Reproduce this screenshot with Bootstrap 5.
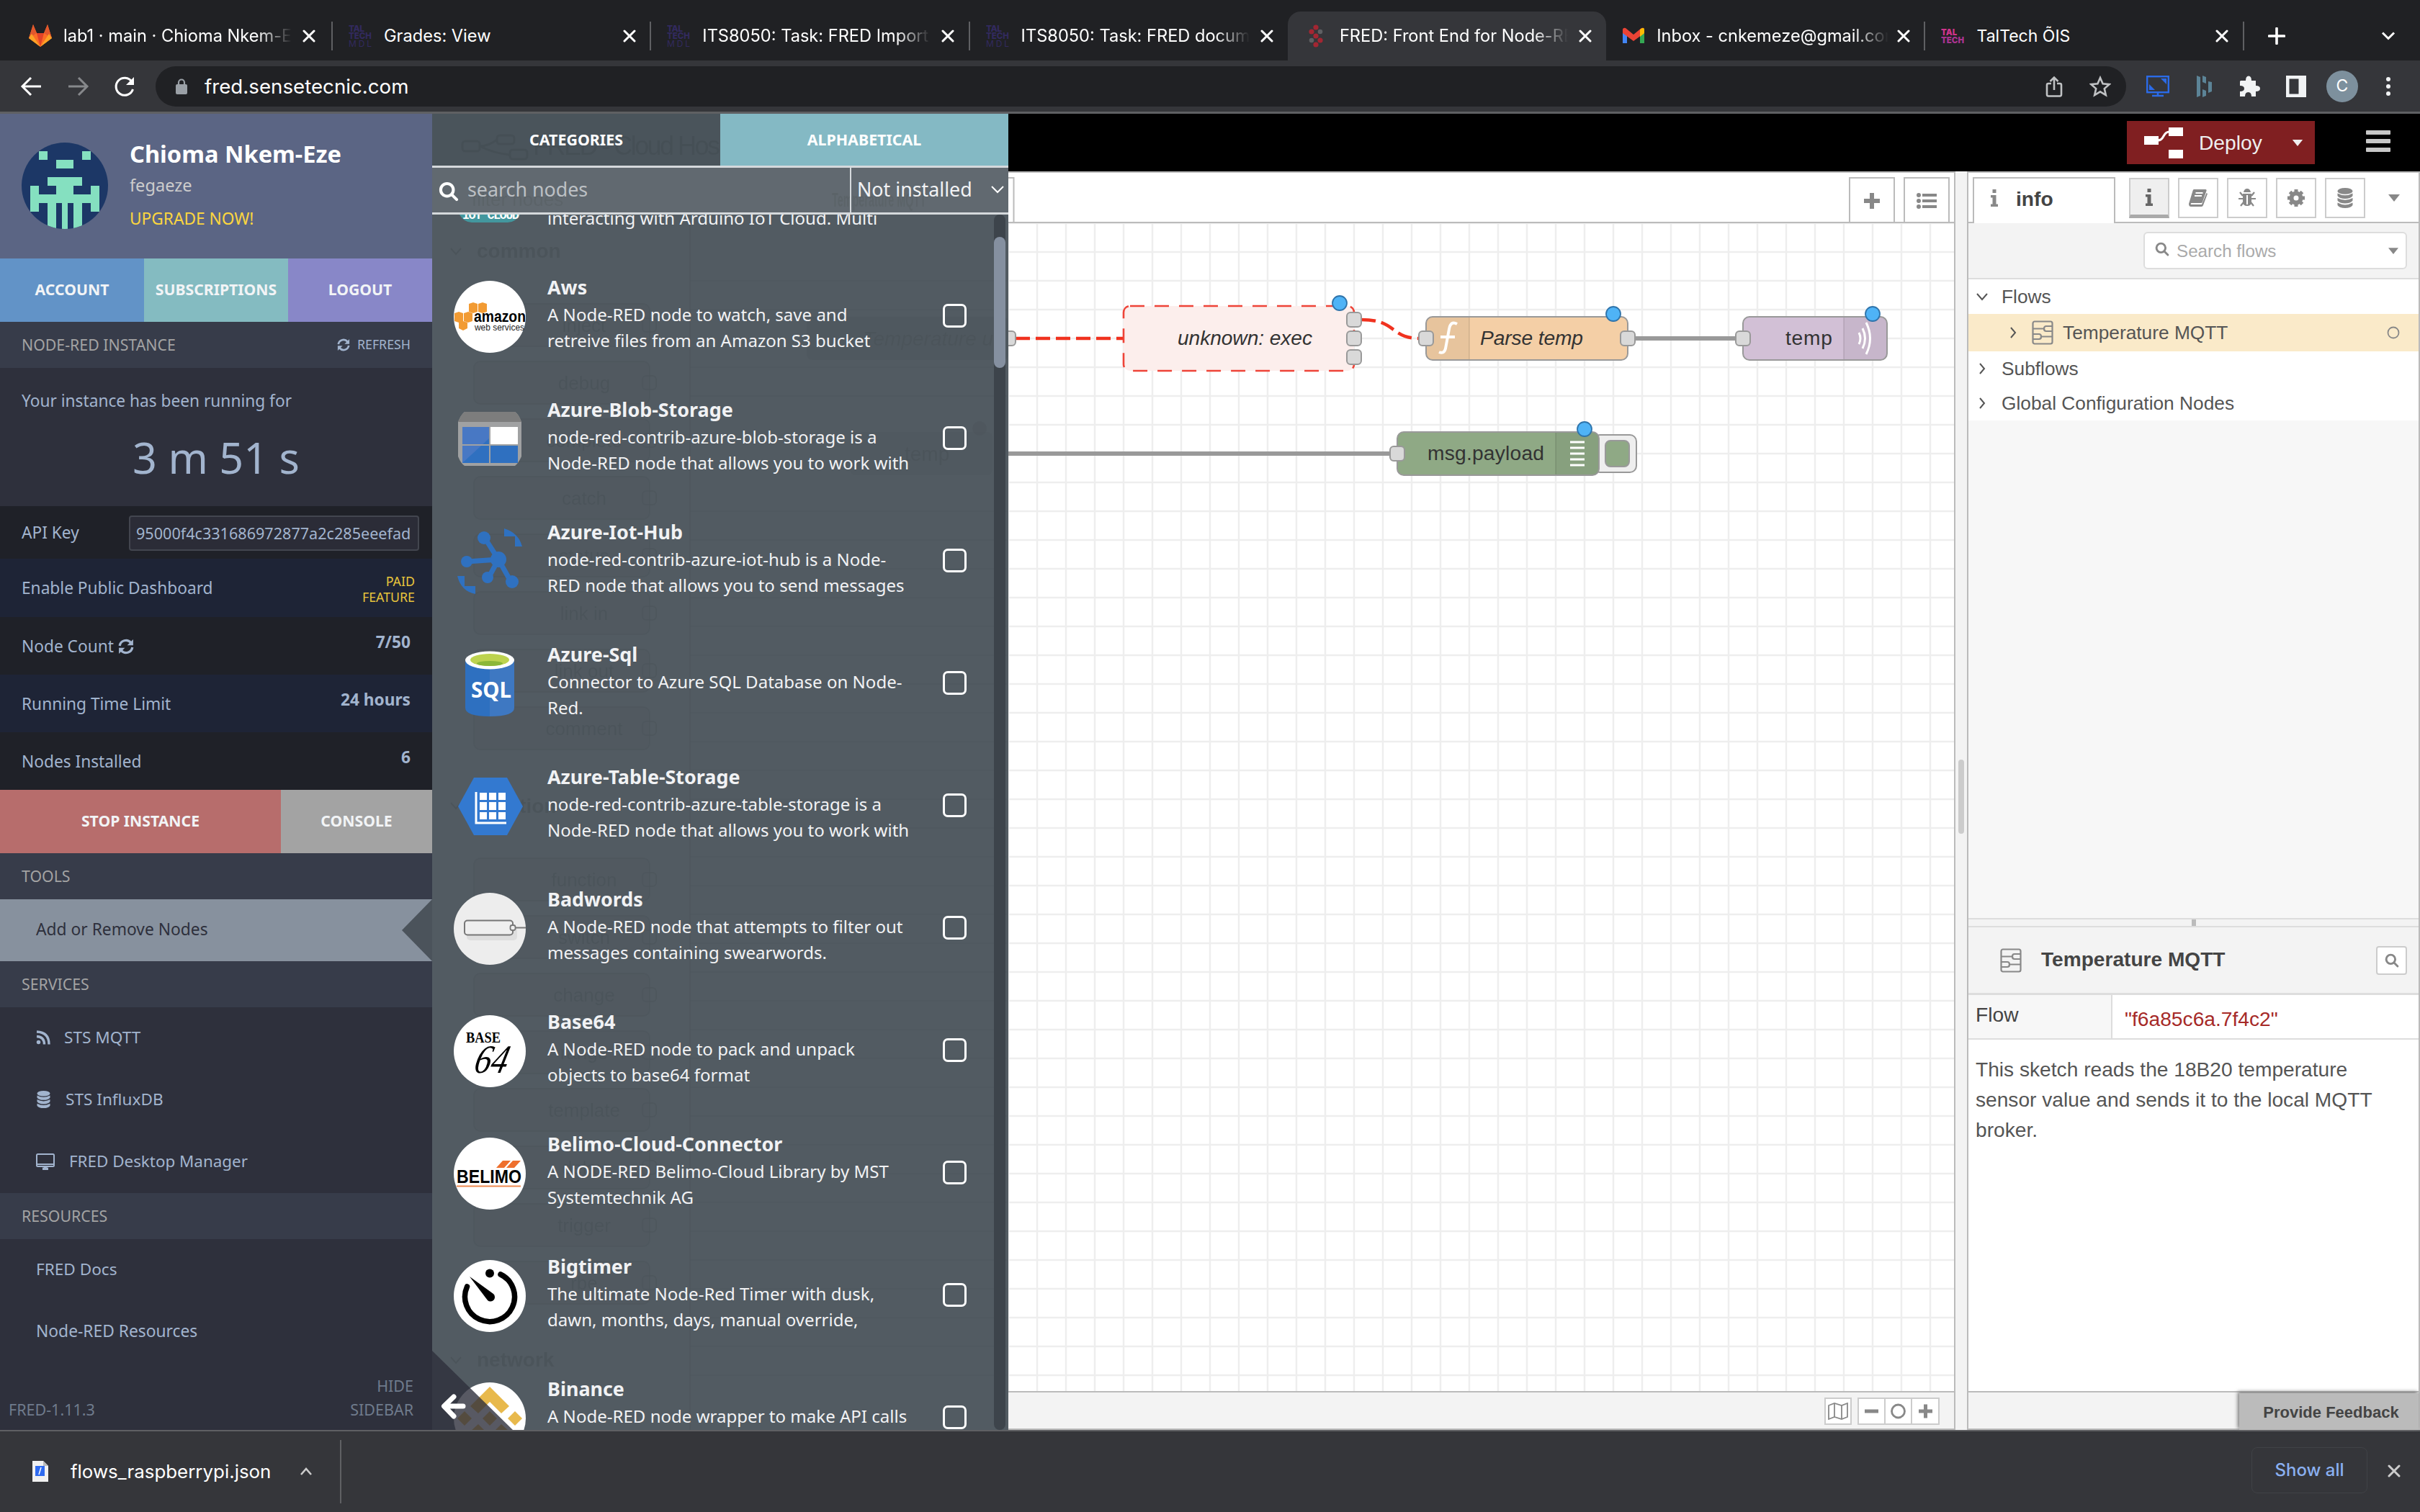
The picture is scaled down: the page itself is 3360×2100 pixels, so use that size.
<!DOCTYPE html>
<html lang="en">
<head>
<meta charset="utf-8">
<title>FRED: Front End for Node-RED</title>
<link href="https://cdn.jsdelivr.net/npm/bootstrap@5.3.0/dist/css/bootstrap.min.css" rel="stylesheet">
<style>
html,body{margin:0;height:2100px;overflow:hidden}
body{width:3360px;font-family:"Noto Sans",sans-serif;font-size:23px;line-height:1;background:#35363a}
svg{display:block;flex:none}
.chrome{font-family:Inter,Roboto,sans-serif;color:#fff}
.helv{font-family:"Liberation Sans",Arial,sans-serif}
/* browser tabs */
.tabstrip{height:84px;background:#202124;padding-top:16px}
.tabx{width:442.3px;height:68px;padding:0 0 0 23px;position:relative;font-size:23.6px}
.tabx .ttl{width:317px;margin-left:17px;overflow:hidden;white-space:nowrap;line-height:34px}
.tabx .fade-r{-webkit-mask-image:linear-gradient(90deg,#000 85%,transparent 100%);mask-image:linear-gradient(90deg,#000 85%,transparent 100%)}
.tabx .cls{margin-left:15px}
.tabx.sep::after{content:"";position:absolute;right:-1px;top:14px;width:2px;height:40px;background:#5f6063}
.tabx.on{background:#35363a;border-radius:18px 18px 0 0}
.toolbar{height:74px;border-bottom:3px solid #5f6063;background:#35363a}
.omni{width:2736px;height:56px;border-radius:28px;background:#202124;font-size:27.7px;padding-left:28px}
.avatar-c{width:44px;height:44px;border-radius:50%;background:#7d909d;font-size:23px}
/* FRED account sidebar */
.fred{width:600px;background:#2e303c;color:#a2b4ce;position:relative}
.prof{height:201px;background:#5b6584}
.nm{font-size:32.6px;font-weight:700;color:#fff;line-height:40px}
.btn3{height:88px;font-size:21.2px;font-weight:700;color:#f2f4f6}
.btn3>div{padding-bottom:2px}
.sect{height:64px;background:#373c4a;color:#a3a3a3;font-size:21.3px;padding:0 30px}
.rw{height:80px;padding:2px 30px 0;font-size:22.7px;background:#1f2128}
.rw.alt{background:#1e2436}
.rw b{margin-top:-11px}
.key{width:403px;height:49px;border:2px solid #43464f;border-radius:4px;background:#2b2c37;font-size:21.6px;padding-left:8px}
.it{height:86px;padding:0 0 2px 50px;font-size:22.6px}
.fit{color:#6f7b8c;font-size:21.5px;line-height:33px}
/* node drawer */
.drawer{width:800px;background:#525b62;color:#f1f2f4;position:relative;overflow:hidden}
.drawer>div{position:relative}
.dtab{width:400px;font-size:21.4px;font-weight:700;color:#fff;height:72px;padding-bottom:1px}
.dsearch{height:68px;border-top:3px solid #d5d9dc;border-bottom:3px solid #d5d9dc;background:rgba(255,255,255,.09);font-size:26.8px}
.nlist{height:1688px;overflow:hidden}
.nlist ul{margin:-113px 0 0;padding:0;width:776px}
.nlist li{height:170px;padding:0 0 0 30px;list-style:none}
.nlist h6{font-size:26.9px;font-weight:700;line-height:40px;margin:24px 0 0}
.nlist p{font-size:24.05px;line-height:36px;margin:0;white-space:nowrap}
.nlist .desc{width:549px;margin-left:30px;height:170px}
.nlist .form-check-input{width:33px;height:33px;margin:67px 0 0;border:3px solid #fff;border-radius:7px;background:transparent}
.ghost{position:absolute;left:0;top:0;pointer-events:none;opacity:.07}
.sbar{width:16px;margin-left:4px;background:#3d444b;border-radius:8px}
.sbar div{margin-top:31px;height:182px;border-radius:8px;background:#8590a0}
/* Node-RED editor */
.hdr{height:80px;background:#000}
.deploy{width:261px;height:60px;background:#801f21;color:#eee;font-size:28.2px}
.ws{width:1315px;border-right:2px solid #bbb;background:#fff}
.wtabs{height:72px;border-top:2px solid #bbb;border-bottom:2px solid #bbb;background:#fff}
.wbtn{width:64px;height:62px;border:2px solid #bbb;border-bottom:0;margin-top:6px;padding-top:2px}
.foot{height:54px;background:#f3f3f3;border-top:2px solid #bbb;border-bottom:2px solid #bbb}
.fb{height:38px;background:#fff;border:2px solid #ccc;margin-top:2px}
.sepr{width:16px;background:#f3f3f3}
.sepr div{width:8px;height:103px;background:#ccc;border-radius:4px}
.rs{width:629px;background:#fff;border-left:2px solid #bbb;border-right:2px solid #bbb;color:#444}
.itab{width:198px;height:66px;margin:6px 0 -2px 6px;border:2px solid #bbb;border-bottom:0;background:#fff;font-size:28.2px;font-weight:700;align-self:flex-start;padding-bottom:8px}
.ib{width:56px;height:56px;border:2px solid #ccc;background:#fff;margin-right:12px;margin-top:2px}
.ib.on{background:#efefef;border-bottom:5px solid #aaa}
.sf{width:366px;height:52px;border:2px solid #ddd;border-radius:6px;background:#fff;color:#aaa;font-size:24.2px}
.tr0{height:48px;font-size:26.3px;color:#555}
.pfb{position:absolute;right:0;bottom:0;width:249px;height:51px;background:#bbb;font-size:22px;font-weight:700;color:#444;box-shadow:-2px -2px 5px #777}
.dl{height:114px;border-top:2px solid #5f6063;background:#35363a}
</style>
<script src="https://cdn.jsdelivr.net/npm/bootstrap@5.3.0/dist/js/bootstrap.bundle.min.js"></script>
</head>
<body class="d-flex flex-column">
<svg width="0" height="0" class="position-absolute">
<symbol id="x" viewBox="0 0 18 18"><path d="M2 2L16 16M16 2L2 16" stroke="currentColor" stroke-width="3" stroke-linecap="round"/></symbol>
<symbol id="db" viewBox="0 0 24 32"><g fill="currentColor"><ellipse cx="12" cy="5" rx="12" ry="5"/><path d="M0 8.500q12 6.500 24 0v4q-3 4.500-12 4.500T0 12.500zM0 16q12 6.500 24 0v4q-3 4.500-12 4.500T0 20zM0 23.500q12 6.500 24 0v4q-3 4.500-12 4.500T0 27.500z"/></g></symbol>
<symbol id="ref" viewBox="0 0 20 20"><g fill="none" stroke="currentColor" stroke-width="3"><path d="M2 9A8 8 0 0 1 16 5M18 11A8 8 0 0 1 4 15"/></g><path d="M19 1v7.500h-7.500zM1 19v-7.500h7.500z" fill="currentColor"/></symbol>
<symbol id="mag" viewBox="0 0 24 24"><g fill="none" stroke="currentColor" stroke-width="3.500" stroke-linecap="round"><circle cx="10" cy="10" r="7.500"/><path d="M15.500 15.500L21.500 21.500"/></g></symbol>
<symbol id="flow" viewBox="0 0 30 34"><g fill="none" stroke="#888" stroke-width="2.200"><rect x="1.500" y="1.500" width="27" height="31" rx="2.500"/><path d="M2 11.500h15M28.500 8h-8.500q-3 0-3 3.500t3 3.500h8.500M2 19h8q3 0 3 3.500T10 26H2M13 22.500h15.500"/></g></symbol>
<symbol id="inf" viewBox="0 0 10 24"><path d="M2.500 0h5v5h-5zM0 8h7.500v12.500H10V24H0v-3.500h2.500v-9H0z" fill="currentColor"/></symbol>
<symbol id="car" viewBox="0 0 16 10"><path d="M0 0h16L8 10z" fill="currentColor"/></symbol>
<symbol id="rt" viewBox="0 0 10 18"><path d="M2 2l6 7-6 7" fill="none" stroke="#555" stroke-width="2"/></symbol>
</svg>

<div class="tabstrip chrome d-flex">
 <div class="tabx sep d-flex align-items-center" style="width:461px;padding-left:40px"><svg width="32" height="32" viewBox="0 0 32 32"><path d="M16 31L0 19 6 0l5 12h10l5-12 6 19z" fill="#fc6d26"/><path d="M16 31L11 12h10z" fill="#e24329"/><path d="M0 19L6 0l5 12zM32 19L26 0l-5 12z" fill="#e2582d"/><path d="M0 19l4-6 12 18zM32 19l-4-6-12 18z" fill="#fca326"/></svg><span class="ttl fade-r" style="margin-left:16px">lab1 · main · Chioma Nkem-Eze</span><svg class="cls" width="18" height="18"><use href="#x"/></svg></div>
 <div class="tabx sep d-flex align-items-center"><svg width="32" height="32" viewBox="0 0 32 32"><g fill="#322a5e" font-family="Inter" font-weight="800" font-size="12"><text x="0" y="10" textLength="22">TAL</text><text x="0" y="20" textLength="32" lengthAdjust="spacingAndGlyphs">TECH</text><text x="0" y="31" textLength="32" font-weight="400">MDL</text></g></svg><span class="ttl">Grades: View</span><svg class="cls" width="18" height="18"><use href="#x"/></svg></div>
 <div class="tabx sep d-flex align-items-center"><svg width="32" height="32" viewBox="0 0 32 32"><g fill="#322a5e" font-family="Inter" font-weight="800" font-size="12"><text x="0" y="10" textLength="22">TAL</text><text x="0" y="20" textLength="32" lengthAdjust="spacingAndGlyphs">TECH</text><text x="0" y="31" textLength="32" font-weight="400">MDL</text></g></svg><span class="ttl fade-r">ITS8050: Task: FRED Import and</span><svg class="cls" width="18" height="18"><use href="#x"/></svg></div>
 <div class="tabx d-flex align-items-center"><svg width="32" height="32" viewBox="0 0 32 32"><g fill="#322a5e" font-family="Inter" font-weight="800" font-size="12"><text x="0" y="10" textLength="22">TAL</text><text x="0" y="20" textLength="32" lengthAdjust="spacingAndGlyphs">TECH</text><text x="0" y="31" textLength="32" font-weight="400">MDL</text></g></svg><span class="ttl fade-r">ITS8050: Task: FRED documents</span><svg class="cls" width="18" height="18"><use href="#x"/></svg></div>
 <div class="tabx on d-flex align-items-center"><svg width="32" height="32" viewBox="0 0 32 32"><g fill="#a32632"><circle cx="16" cy="4" r="3.600"/><circle cx="10" cy="10" r="3.600"/><circle cx="16" cy="16" r="3.600"/><circle cx="22" cy="22" r="3.600"/><circle cx="16" cy="28" r="3.600"/></g><g fill="#5f6063"><circle cx="22" cy="10" r="3.300"/><circle cx="10" cy="22" r="3.300"/></g></svg><span class="ttl fade-r">FRED: Front End for Node-RED</span><svg class="cls" width="18" height="18"><use href="#x"/></svg></div>
 <div class="tabx sep d-flex align-items-center"><svg width="30" height="24" viewBox="0 0 30 24"><path d="M0 2v20h6V10z" fill="#4285f4"/><path d="M24 10v12h6V2z" fill="#34a853"/><path d="M0 4Q0 0 4 1l11 9L26 1q4-1 4 3v4L15 19 0 8z" fill="#ea4335"/><path d="M24 3q6-5 6 1v4l-6 5z" fill="#fbbc04"/></svg><span class="ttl fade-r" style="width:322px">Inbox - cnkemeze@gmail.com</span><svg style="margin-left:12px" width="18" height="18"><use href="#x"/></svg></div>
 <div class="tabx sep d-flex align-items-center"><svg width="32" height="20" viewBox="0 0 32 20"><g fill="#d0348b" font-family="Inter" font-weight="900" font-size="12"><text x="0" y="9" textLength="22" lengthAdjust="spacingAndGlyphs">TAL</text><text x="0" y="20" textLength="32" lengthAdjust="spacingAndGlyphs" fill="#a8338e">TECH</text></g></svg><span class="ttl" style="font-size:23px">TalTech ÕIS</span><svg class="cls" width="18" height="18"><use href="#x"/></svg></div>
 <div class="d-flex align-items-center flex-grow-1" style="padding:0 34px"><svg width="24" height="24"><path d="M12 1.500v21M1.500 12h21" stroke="#fff" stroke-width="3.600" stroke-linecap="round"/></svg><svg class="ms-auto" width="20" height="14"><path d="M2 2.500l8 8 8-8" fill="none" stroke="#fff" stroke-width="3"/></svg></div>
</div>

<div class="toolbar chrome d-flex align-items-center">
 <svg width="216" height="72" fill="none" stroke-width="3" viewBox="0 -1 216 72"><path d="M57 35H32M43 23L31 35 43 47" stroke="#fff"/><path d="M95 35h25M109 23l12 12-12 12" stroke="#86888b"/><path d="M183 28.500A12 12 0 1 0 184.500 39" stroke="#fff"/><path d="M186 22v11h-11z" fill="#fff"/></svg>
 <div class="omni d-flex align-items-center"><svg width="16" height="22"><rect y="8" width="16" height="14" rx="2" fill="#9aa0a6"/><path d="M4 9V5.500a4 4 0 0 1 8 0V9" fill="none" stroke="#9aa0a6" stroke-width="2.200"/></svg><span style="margin-left:24px;line-height:40px">fred.sensetecnic.com</span>
 <svg class="ms-auto" width="24" height="30" style="margin-right:37px" fill="none" stroke="#c0c2c4" stroke-width="2.600"><path d="M8 11H4q-2 0-2 2v13q0 2.500 2 2.500h16q2 0 2-2.500V13q0-2-2-2h-4M12 20V3M6.500 8L12 2.500 17.500 8"/></svg>
 <svg width="30" height="30" style="margin-right:21px"><path d="M15 3l3.600 8.300 9 .8-6.800 6 2 8.900L15 22.300 7.200 27l2-8.900-6.800-6 9-.8z" fill="none" stroke="#c0c2c4" stroke-width="2.600"/></svg></div>
 <svg width="32" height="30" style="margin-left:28px"><rect x="1.200" y="1.200" width="29.600" height="22" fill="none" stroke="#2b6be8" stroke-width="2.400"/><path d="M20 4h8v8zM4 12l8 8H4z" fill="#2b6be8"/><path d="M16 23v5M8 28h16" stroke="#2b6be8" stroke-width="2.600"/></svg>
 <svg width="22" height="32" style="margin-left:38px" fill="#5c8497"><path d="M0 1l5 2v26l-5 2zM8 1l5 2v9l-5-2zM16 9l5 1v13l-5 2zM8 20l5 2v7l-5 2z"/></svg>
 <svg width="30" height="30" style="margin-left:37px" viewBox="0 0 30 30"><path d="M2 7h7q0-6.500 4-6.500T17 7h6v7q6 0 6 4t-6 4v7h-6q0-6-4.500-6T8 29H1v-7q6 0 6-4t-6-4V8z" fill="#f1f3f4"/></svg>
 <svg width="28" height="30" style="margin-left:35px"><path d="M0 0h28v30H0z" fill="#f1f3f4"/><path d="M4.500 4.500h13v21h-13z" fill="#35363a"/></svg>
 <div class="avatar-c d-flex align-items-center justify-content-center" style="margin-left:28px">C</div>
 <svg width="6" height="28" style="margin-left:39px" fill="#f1f3f4"><circle cx="3" cy="4" r="3"/><circle cx="3" cy="14" r="3"/><circle cx="3" cy="24" r="3"/></svg>
</div>

<div class="d-flex" style="height:1828px">
 <aside class="fred d-flex flex-column">
  <div class="prof d-flex">
   <svg width="120" height="120" viewBox="0 0 120 120" style="margin:40px 0 0 30px"><clipPath id="cc"><circle cx="60" cy="60" r="60"/></clipPath><g clip-path="url(#cc)"><path d="M0 0h120v120H0z" fill="#1c3766"/><path d="M24 12h12v12H24zM84 12h12v12H84zM48 24h24v12H48zM36 48h48v12H72v12h24V60h12v36H96V84H84v36H72V84h-8v36h-8V84h-8v36H36V84H24v12H12V60h12v12h24V60H36z" fill="#85e0c0"/></g></svg>
   <div style="margin:36px 0 0 30px"><div class="nm">Chioma Nkem-Eze</div><div style="font-size:23.6px;color:#ccc;line-height:46px">fegaeze</div><div style="font-size:22.7px;color:#fbd63f;line-height:48px">UPGRADE NOW!</div></div>
  </div>
  <div class="d-flex btn3"><div class="w-100 d-flex align-items-center justify-content-center" style="background:#6293c7">ACCOUNT</div><div class="w-100 d-flex align-items-center justify-content-center" style="background:#84bbc1">SUBSCRIPTIONS</div><div class="w-100 d-flex align-items-center justify-content-center" style="background:#8887c8">LOGOUT</div></div>
  <div class="sect d-flex align-items-center"><span>NODE-RED INSTANCE</span><span class="ms-auto d-flex align-items-center" style="font-size:17.8px;color:#a2b4ce"><svg width="18" height="18" style="margin-right:10px"><use href="#ref"/></svg>REFRESH</span></div>
  <div style="height:192px;padding:34px 30px 0"><div style="font-size:22.7px;line-height:24px">Your instance has been running for</div><div class="text-center" style="font-size:59.300px;line-height:60px;margin-top:36px">3 m 51 s</div></div>
  <div class="rw d-flex align-items-center" style="height:73px;padding-right:18px"><span>API Key</span><div class="key ms-auto d-flex align-items-center">95000f4c331686972877a2c285eeefad</div></div>
  <div class="rw alt d-flex align-items-center" style="height:81px;padding-right:24px"><span>Enable Public Dashboard</span><div class="ms-auto text-end" style="font-size:17.8px;line-height:22px;color:#e7c53c">PAID<br>FEATURE</div></div>
  <div class="rw d-flex align-items-center"><span>Node Count</span><svg width="22" height="22" style="margin-left:6px"><use href="#ref"/></svg><b class="ms-auto">7/50</b></div>
  <div class="rw alt d-flex align-items-center"><span>Running Time Limit</span><b class="ms-auto">24 hours</b></div>
  <div class="rw d-flex align-items-center"><span>Nodes Installed</span><b class="ms-auto">6</b></div>
  <div class="d-flex btn3"><div class="d-flex align-items-center justify-content-center" style="width:390px;background:#b76d6c">STOP INSTANCE</div><div class="flex-grow-1 d-flex align-items-center justify-content-center" style="background:#a3a3a3">CONSOLE</div></div>
  <div class="sect d-flex align-items-center">TOOLS</div>
  <div class="it d-flex align-items-center" style="background:#87919e;color:#2e303c;font-size:22.8px;padding-bottom:0"><span style="margin-top:-2px">Add or Remove Nodes</span><svg class="ms-auto" width="42" height="86"><path d="M42 0L0 43 42 86z" fill="#4b535b"/></svg></div>
  <div class="sect d-flex align-items-center">SERVICES</div>
  <div class="it d-flex align-items-center"><svg width="20" height="20" fill="none" stroke="currentColor" stroke-width="3.400"><path d="M1 8.500Q11.500 9 11.500 19.500M1 2Q18 2.500 18 19.500"/><circle cx="3.500" cy="16.500" r="2" fill="currentColor" stroke-width="1.500"/></svg><span style="margin-left:19px">STS MQTT</span></div>
  <div class="it d-flex align-items-center"><svg width="21" height="24"><use href="#db"/></svg><span style="margin-left:20px">STS InfluxDB</span></div>
  <div class="it d-flex align-items-center"><svg width="26" height="23" fill="none" stroke="currentColor" stroke-width="2"><rect x="1" y="1" width="24" height="17" rx="1.500"/><path d="M2 15h22" stroke-width="2"/><path d="M9 21.500h8M13 17v4" stroke-width="4"/></svg><span style="margin-left:20px;font-size:22.4px">FRED Desktop Manager</span></div>
  <div class="sect d-flex align-items-center">RESOURCES</div>
  <div class="it d-flex align-items-center">FRED Docs</div>
  <div class="it d-flex align-items-center" style="font-size:22.8px">Node-RED Resources</div>
  <div class="fit d-flex align-items-end" style="padding:15px 26px 0 12px"><span>FRED-1.11.3</span><span class="ms-auto text-end">HIDE<br>SIDEBAR</span></div>
 </aside>

 <section class="drawer">
  <svg class="ghost helv" width="800" height="1828" viewBox="600 158 800 1828" font-size="26" fill="#000" id="gh">
   <path d="M958 310v1676" stroke="#000" stroke-width="2" opacity=".5"/>
   <g fill="none" stroke="#000" stroke-width="3"><rect x="642" y="196" width="24" height="14" rx="4"/><rect x="690" y="188" width="24" height="12" rx="4"/><rect x="708" y="208" width="24" height="13" rx="4"/><path d="M666 203q12 0 24-9M666 203q20 10 42 12"/></g>
   <text x="740" y="215" font-size="36" textLength="260">FRED - Cloud Hos</text>
   <text x="655" y="286">filter nodes</text><text x="1155" y="287" font-size="28" font-weight="700" textLength="131" lengthAdjust="spacingAndGlyphs">Temperature MQTT</text>
   <g font-size="28" font-weight="700"><text x="662" y="358">common</text><text x="662" y="1129">function</text><text x="662" y="1898">network</text></g>
   <g fill="none" stroke="#000" stroke-width="2"><path d="M626 345l7 8 7-8M626 1115l7 8 7-8M626 1885l7 8 7-8"/></g>
   <path d="M958 390h440M958 430h440M958 510h440M958 550h440M958 710h440M958 750h440M958 790h440M958 830h440M958 870h440M958 910h440M958 950h440M958 990h440M958 1030h440M958 1070h440M958 1110h440M958 1150h440M958 1190h440M958 1230h440M958 1270h440M958 1310h440M958 1350h440M958 1390h440M958 1430h440M958 1470h440M958 1510h440M958 1550h440M958 1590h440M958 1630h440M958 1670h440M958 1710h440M958 1750h440M958 1790h440M958 1830h440M958 1870h440M958 1910h440" stroke="#000" stroke-width="2" opacity=".25"/>
   <rect x="1120" y="440" width="280" height="60" rx="8" opacity=".4"/><rect x="1180" y="600" width="198" height="60" rx="8" opacity=".3"/>
   <g font-size="28"><text x="1198" y="480" font-style="italic">Temperature u</text><text x="1256" y="640">temp</text></g><circle cx="1360" cy="595" r="10" opacity=".5"/>
  </svg>
  <div class="d-flex"><div class="dtab d-flex align-items-center justify-content-center" style="background:rgba(50,62,72,.25)">CATEGORIES</div><div class="dtab d-flex align-items-center justify-content-center" style="background:#84b9c4">ALPHABETICAL</div></div>
  <div class="dsearch d-flex align-items-center"><svg width="28" height="28" style="margin:3px 0 0 9px;color:#fff"><use href="#mag"/></svg><span style="margin:-2px 0 0 12px;color:#bcc0c4">search nodes</span><div class="ms-auto d-flex align-items-center h-100" style="border-left:2px solid #d5d9dc;width:220px;padding:0 0 2px 8px">Not installed<svg class="ms-auto" width="20" height="12" style="margin-right:5px"><path d="M2 2l8 8 8-8" fill="none" stroke="#fff" stroke-width="2"/></svg></div></div>
  <div class="nlist d-flex"><ul>
   <li class="d-flex"><svg width="100" height="170" viewBox="0 -35 100 170"><path d="M5 0H95V72Q88 89 75 89H25Q12 89 5 72z" fill="#43979e"/><text x="12" y="84" font-family="Liberation Mono" font-weight="700" font-size="17" fill="#fff" textLength="79">IOT CLOUD</text></svg><div class="desc"><h6>Arduino-Iot-Cloud</h6><p>A Node-RED node for<br>interacting with Arduino IoT Cloud. Multi</p></div></li>
   <li class="d-flex"><svg width="100" height="170" viewBox="0 -35 100 170"><circle cx="50" cy="50" r="50" fill="#fff"/><g fill="#f29b33"><path d="M21 32l6-2 6 2v11l-6 2-6-2zM34 32l6-2 6 2v11l-6 2-6-2zM1 45l6-2 6 2v11l-6 2-6-2zM14 45l6-2 6 2v11l-6 2-6-2zM7 58l6-2 6 2v8l-6 3-6-3z"/></g><text x="28" y="57" font-family="Liberation Sans" font-weight="700" font-size="22" textLength="72" lengthAdjust="spacingAndGlyphs">amazon</text><text x="29" y="69" font-family="Liberation Sans" font-size="13.500" fill="#222" textLength="69" lengthAdjust="spacingAndGlyphs">web services</text></svg><div class="desc"><h6>Aws</h6><p>A Node-RED node to watch, save and<br>retreive files from an Amazon S3 bucket</p></div><input type="checkbox" class="form-check-input"></li>
   <li class="d-flex"><svg width="100" height="170" viewBox="0 -35 100 170"><path d="M15 12h70q5 3 9 14v48q-4 9-9 13H15q-5-3-9-13V26q4-10 9-14z" fill="#a0a1a2"/><path d="M15 12h70q5 3 9 14H6q4-10 9-14z" fill="#7d7d7d"/><path d="M12 33h37v24H12zM12 59h37v24H12z" fill="#4878c4"/><path d="M51 59h38v24H51zM12 83l37-34v8L34 59h15v24z" fill="#2f70c0"/><path d="M51 33h38v24H51z" fill="#fff"/><path d="M12 58h77" stroke="#a0a1a2" stroke-width="2"/></svg><div class="desc"><h6>Azure-Blob-Storage</h6><p>node-red-contrib-azure-blob-storage is a<br>Node-RED node that allows you to work with</p></div><input type="checkbox" class="form-check-input"></li>
   <li class="d-flex"><svg width="100" height="170" viewBox="0 -35 100 170"><g fill="#2f71c0" stroke="#2f71c0"><path d="M62 47L43 17M62 47L18 50M62 47L48 73M62 47L80 79" stroke-width="7"/><g stroke="none"><circle cx="62" cy="47" r="11"/><circle cx="42" cy="17" r="9"/><circle cx="18" cy="50" r="8"/><circle cx="47" cy="72" r="8"/><circle cx="81" cy="78" r="9"/><path d="M70 4q20 6 25 25H85V15H70zM5 70h10v14h15v11Q10 91 5 70z"/></g></g></svg><div class="desc"><h6>Azure-Iot-Hub</h6><p>node-red-contrib-azure-iot-hub is a Node-<br>RED node that allows you to send messages</p></div><input type="checkbox" class="form-check-input"></li>
   <li class="d-flex"><svg width="100" height="170" viewBox="0 -35 100 170"><path d="M16 17v66q0 12 34 12V17z" fill="#2e70c0"/><path d="M84 17v66q0 12-34 12V17z" fill="#3e78c2"/><ellipse cx="50" cy="17" rx="34" ry="12.500" fill="#fff"/><ellipse cx="50" cy="16.500" rx="27" ry="8.500" fill="#bdd34f"/><ellipse cx="50" cy="21.500" rx="18" ry="3.500" fill="#8bb738"/><text x="24" y="69" font-family="Noto Sans" font-weight="700" font-size="31" fill="#fff" textLength="56" lengthAdjust="spacingAndGlyphs">SQL</text></svg><div class="desc"><h6>Azure-Sql</h6><p>Connector to Azure SQL Database on Node-<br>Red.</p></div><input type="checkbox" class="form-check-input"></li>
   <li class="d-flex"><svg width="100" height="170" viewBox="0 -35 100 170"><path d="M28 10h46l22 40-22 40H28L6 50z" fill="#3379d0"/><path d="M31 30v43h42" fill="none" stroke="#fff" stroke-width="3"/><path d="M36 31h10v10H36zM49 31h10v10H49zM62 31h10v10H62zM36 44h10v11H36zM49 44h10v11H49zM62 44h10v11H62zM36 58h10v10H36zM49 58h10v10H49zM62 58h10v10H62z" fill="#fff"/></svg><div class="desc"><h6>Azure-Table-Storage</h6><p>node-red-contrib-azure-table-storage is a<br>Node-RED node that allows you to work with</p></div><input type="checkbox" class="form-check-input"></li>
   <li class="d-flex"><svg width="100" height="170" viewBox="0 -35 100 170"><circle cx="50" cy="50" r="50" fill="#ededed"/><rect x="18" y="46" width="70" height="20" rx="5" fill="#dedede"/><rect x="15" y="38.500" width="67" height="20" rx="4" fill="#efefef" stroke="#777" stroke-width="2"/><path d="M85 48.500h15" stroke="#777" stroke-width="2"/><rect x="78.500" y="45" width="7" height="7" rx="2.500" fill="#eee" stroke="#777" stroke-width="1.800"/></svg><div class="desc"><h6>Badwords</h6><p>A Node-RED node that attempts to filter out<br>messages containing swearwords.</p></div><input type="checkbox" class="form-check-input"></li>
   <li class="d-flex"><svg width="100" height="170" viewBox="0 -35 100 170"><circle cx="50" cy="50" r="50" fill="#fff"/><text x="17" y="38" font-family="Liberation Serif" font-weight="700" font-size="20" textLength="48" lengthAdjust="spacingAndGlyphs">BASE</text><text transform="translate(26 80) skewX(-14)" font-family="Liberation Serif" font-style="italic" font-size="56" textLength="46" lengthAdjust="spacingAndGlyphs">64</text></svg><div class="desc"><h6>Base64</h6><p>A Node-RED node to pack and unpack<br>objects to base64 format</p></div><input type="checkbox" class="form-check-input"></li>
   <li class="d-flex"><svg width="100" height="170" viewBox="0 -35 100 170"><circle cx="50" cy="50" r="50" fill="#fff"/><path d="M68 32h11l-9 10H59zM82 32h11l-9 10H73z" fill="#ee6f2d"/><text x="4" y="63" font-family="Liberation Sans" font-weight="700" font-size="26" textLength="90" lengthAdjust="spacingAndGlyphs">BELIMO</text><path d="M4 67.500h89" stroke="#ee8a50" stroke-width="2"/></svg><div class="desc"><h6>Belimo-Cloud-Connector</h6><p>A NODE-RED Belimo-Cloud Library by MST<br>Systemtechnik AG</p></div><input type="checkbox" class="form-check-input"></li>
   <li class="d-flex"><svg width="100" height="170" viewBox="0 -35 100 170"><circle cx="50" cy="50" r="50" fill="#fff"/><path d="M18.500 37A34.500 34.500 0 1 0 65 20" fill="none" stroke="#000" stroke-width="7.500" stroke-linecap="round"/><circle cx="50" cy="18.500" r="6"/><path d="M22 23L55 47a6 6 0 0 1-8 9z"/></svg><div class="desc"><h6>Bigtimer</h6><p>The ultimate Node-Red Timer with dusk,<br>dawn, months, days, manual override,</p></div><input type="checkbox" class="form-check-input"></li>
   <li class="d-flex"><svg width="100" height="170" viewBox="0 -35 100 170"><circle cx="50" cy="50" r="50" fill="#fff"/><path d="M50 6L77 33 66 43 50 27 34 43 23 33zM15 40l10 10-10 10-10-10zM50 40l10 10-10 10-10-10zM85 40l10 10-10 10-10-10zM34 58l16 16 16-16 11 10-27 27-27-27z" fill="#e8b94c"/></svg><div class="desc"><h6>Binance</h6><p>A Node-RED node wrapper to make API calls<br>to Binance</p></div><input type="checkbox" class="form-check-input"></li>
  </ul><div class="sbar"><div></div></div></div>
  <svg class="position-absolute start-0 bottom-0" width="112" height="110"><path d="M0 0L112 110H0z" fill="#2e303c" fill-opacity=".8"/><path d="M43 77H18M30 64L16.500 77 30 91" fill="none" stroke="#fff" stroke-width="7" stroke-linecap="round" stroke-linejoin="round"/></svg>
 </section>

 <main class="helv d-flex flex-column flex-grow-1">
  <div class="hdr d-flex align-items-center justify-content-end">
   <div class="deploy d-flex align-items-center"><svg width="54" height="44" style="margin:0 0 0 24px"><path d="M0 13h20v12H0zM34 1h20v12H34zM34 32h20v12H34z" fill="#fff"/><path d="M19 19q5 0 8-6t8-6" fill="none" stroke="#fff" stroke-width="3"/></svg><span style="margin-left:22px">Deploy</span><svg width="16" height="9" style="margin-left:41px"><use href="#car"/></svg></div>
   <svg width="34" height="34" style="margin:0 41px 0 71px" fill="#c7c7c7"><rect width="34" height="6" rx="1"/><rect y="12" width="34" height="6" rx="1"/><rect y="24" width="34" height="6" rx="1"/></svg>
  </div>
  <div class="d-flex flex-grow-1">
   <div class="ws d-flex flex-column">
    <div class="wtabs d-flex"><svg width="9" height="70"><path d="M0 7h7.500v61.500" fill="none" stroke="#bbb" stroke-width="2"/></svg><div class="wbtn ms-auto d-flex align-items-center justify-content-center"><svg width="22" height="22"><path d="M11 0v22M0 11h22" stroke="#888" stroke-width="6"/></svg></div><div class="wbtn d-flex align-items-center justify-content-center" style="margin-left:12px;margin-right:6px"><svg width="28" height="22" fill="#888"><circle cx="3" cy="3" r="3"/><circle cx="3" cy="11" r="3"/><circle cx="3" cy="19" r="3"/><path d="M8 1h20v4H8zM8 9h20v4H8zM8 17h20v4H8z"/></svg></div></div>
    <svg width="1313" height="1622" viewBox="1400 310 1313 1622" font-size="28.200" fill="#333">
     <defs><pattern id="gr" x="1400" y="310" width="40" height="40" patternUnits="userSpaceOnUse"><path d="M0 0h40M0 40h40M0 0v40M40 0v40" stroke="#eee" stroke-width="2.500" fill="none"/></pattern></defs>
     <rect x="1400" y="310" width="1313" height="1622" fill="url(#gr)"/>
     <g fill="none"><path d="M1410 470h150" stroke="#f0321f" stroke-width="4.500" stroke-dasharray="20 8"/><path d="M1890 444c50 0 40 26 80 26" stroke="#f0321f" stroke-width="4.500" stroke-dasharray="20 8"/><path d="M2260 470h160M1400 630h540" stroke="#999" stroke-width="6"/></g>
     <rect x="1560" y="425" width="320" height="90" rx="9" fill="#fceeec" stroke="#ee4438" stroke-width="2.600" stroke-dasharray="20 14"/>
     <g stroke="#999" stroke-width="2"><rect x="1980" y="440" width="280" height="60" rx="9" fill="#f4cfa6"/><rect x="2420" y="440" width="200" height="60" rx="9" fill="#d2c0d6"/><rect x="2212" y="604" width="60" height="52" rx="9" fill="#eee"/><rect x="2229" y="612" width="33" height="36" rx="7" fill="#8fa985"/><rect x="1940" y="600" width="280" height="60" rx="9" fill="#8fa985"/></g>
     <g fill="#000" fill-opacity=".05"><path d="M1989 441h51v58h-51q-8 0-8-8v-42q0-8 8-8zM2560 441h51q8 0 8 8v42q0 8-8 8h-51zM2160 601h51q8 0 8 8v42q0 8-8 8h-51z"/></g>
     <path d="M2040 441v58M2560 441v58M2160 601v58" stroke="#000" stroke-opacity=".12" stroke-width="1.500"/>
     <path d="M2023 450q-9-5-11 7l-5 27q-2 8-9 5M2000 468h20" fill="none" stroke="#fff" stroke-width="4"/>
     <path d="M2581 462q4 8 0 16M2586 456q7 14 0 28M2591 448q11 22 0 44" fill="none" stroke="#fff" stroke-width="3"/>
     <path d="M2180 614h20M2180 622h20M2180 630h20M2180 638h20M2180 646h20" stroke="#fff" stroke-width="3"/>
     <g fill="#d9d9d9" stroke="#999" stroke-width="2"><rect x="1390" y="460" width="20" height="20" rx="5"/><rect x="1870" y="434" width="20" height="20" rx="5"/><rect x="1870" y="460" width="20" height="20" rx="5"/><rect x="1870" y="486" width="20" height="20" rx="5"/><rect x="1970" y="460" width="20" height="20" rx="5"/><rect x="2250" y="460" width="20" height="20" rx="5"/><rect x="2410" y="460" width="20" height="20" rx="5"/><rect x="1930" y="620" width="20" height="20" rx="5"/></g>
     <g fill="#4fb3f6" stroke="#2f74ab" stroke-width="1.800"><circle cx="1860" cy="421" r="10"/><circle cx="2240" cy="436" r="10"/><circle cx="2600" cy="436" r="10"/><circle cx="2200" cy="596" r="10"/></g>
     <text x="1635" y="479" font-style="italic" textLength="187">unknown: exec</text><text x="2055" y="479" font-style="italic" textLength="143">Parse temp</text><text x="2479" y="479" textLength="65">temp</text><text x="1982" y="639" textLength="162">msg.payload</text>
    </svg>
    <div class="foot d-flex align-items-center justify-content-end" style="padding-right:20px"><div class="fb d-flex align-items-center justify-content-center" style="width:38px;margin-right:8px"><svg width="28" height="24" fill="none" stroke="#888" stroke-width="1.800"><path d="M1 4l8-3 10 3 8-3v19l-8 3-10-3-8 3zM9 1v19M19 4v19"/></svg></div>
     <div class="fb d-flex" style="width:114px"><svg width="110" height="34"><path d="M36 0v34M73 0v34" stroke="#ccc" stroke-width="2"/><path d="M8 17h19M83 17h19M92.500 7.500v19" stroke="#888" stroke-width="5"/><circle cx="54.500" cy="17" r="9" fill="none" stroke="#888" stroke-width="2.800"/></svg></div></div>
   </div>
   <div class="sepr d-flex align-items-center justify-content-center"><div style="margin-top:-12px"></div></div>
   <div class="rs d-flex flex-column position-relative">
    <div class="wtabs d-flex align-items-center"><div class="itab d-flex align-items-center"><svg width="10" height="24" style="margin:-2px 0 0 23px;color:#888"><use href="#inf"/></svg><span style="margin-left:25px">info</span></div>
     <div class="d-flex align-items-center ms-auto" style="color:#888"><div class="ib on d-flex align-items-center justify-content-center" style="color:#666"><svg width="10" height="24"><use href="#inf"/></svg></div>
      <div class="ib d-flex align-items-center justify-content-center"><svg width="26" height="24"><path d="M7 0h16q2 0 1.500 2L19 17.500q-.5 1.500-2 1.500H4q-2 0-1 2h15l6.500-16 1.500 1L20 22q-.5 2-2.500 2H3q-3 0-3-4L5.500 2Q6 0 7 0z" fill="#888"/><path d="M9.500 5h10M8 9h10" stroke="#fff" stroke-width="1.800"/></svg></div>
      <div class="ib d-flex align-items-center justify-content-center"><svg width="24" height="26"><path d="M7 5q1-5 5-5t5 5zM6 7h12v11q0 6-6 6t-6-6z" fill="#888"/><path d="M6 10L2 5M18 10l4-5M6 14H0M18 14h6M7 19l-4 5M17 19l4 5" stroke="#888" stroke-width="2.200"/><path d="M12 9v13" stroke="#fff" stroke-width="2"/></svg></div>
      <div class="ib d-flex align-items-center justify-content-center"><svg width="24" height="24"><circle cx="12" cy="12" r="6.500" fill="none" stroke="#888" stroke-width="6"/><path d="M12 0v4M12 20v4M0 12h4M20 12h4M3.500 3.500l3 3M17.500 17.500l3 3M3.500 20.500l3-3M17.500 6.500l3-3" stroke="#888" stroke-width="5"/></svg></div>
      <div class="ib d-flex align-items-center justify-content-center"><svg width="24" height="28"><use href="#db"/></svg></div><svg width="16" height="10" style="margin:2px 26px 0 20px"><use href="#car"/></svg></div></div>
    <div class="d-flex align-items-center justify-content-end" style="height:78px;background:#f3f3f3;border-bottom:2px solid #ddd;padding-right:16px"><div class="sf d-flex align-items-center"><svg width="20" height="22" style="margin:-4px 10px 0 14px;color:#888"><use href="#mag"/></svg><span style="margin-top:2px">Search flows</span><svg class="ms-auto" width="14" height="9" style="color:#888;margin-right:10px"><use href="#car"/></svg></div></div>
    <div class="tr0 d-flex align-items-center" style="padding-left:10px"><svg width="18" height="12" style="margin-right:18px"><path d="M2 2l7 8 7-8" fill="none" stroke="#555" stroke-width="2"/></svg>Flows</div>
    <div class="tr0 d-flex align-items-center" style="height:52px;background:#faeac9;padding-left:57px"><svg width="10" height="18"><use href="#rt"/></svg><svg width="30" height="34" style="margin:0 13px 0 21px"><use href="#flow"/></svg>Temperature MQTT<svg class="ms-auto" width="18" height="18" style="margin-right:26px"><circle cx="9" cy="9" r="7.500" fill="none" stroke="#888" stroke-width="1.800"/></svg></div>
    <div class="tr0 d-flex align-items-center" style="padding-left:14px"><svg width="10" height="18" style="margin-right:22px"><use href="#rt"/></svg>Subflows</div>
    <div class="tr0 d-flex align-items-center" style="padding-left:14px"><svg width="10" height="18" style="margin-right:22px"><use href="#rt"/></svg>Global Configuration Nodes</div>
    <div style="height:691px;background:#f7f7f7"></div>
    <div class="d-flex justify-content-center" style="height:13px;background:#f3f3f3;border-top:2px solid #ddd;border-bottom:2px solid #ddd"><div style="width:6px;background:#bbb"></div></div>
    <div class="d-flex align-items-center" style="height:94px;background:#f3f3f3;border-bottom:3px solid #ddd;font-size:28.1px;font-weight:700;padding:0 16px 0 44px"><svg width="30" height="34"><use href="#flow"/></svg><span style="margin-left:27px">Temperature MQTT</span><div class="ms-auto d-flex align-items-center justify-content-center" style="width:43px;height:40px;border:2px solid #ccc;border-radius:4px;background:#fff;color:#888"><svg width="20" height="22"><use href="#mag"/></svg></div></div>
    <div class="d-flex" style="height:62px;border-bottom:2px solid #ddd;font-size:28.2px"><div style="width:200px;background:#f7f7f7;border-right:2px solid #ddd;padding:13px 0 0 10px">Flow</div><div style="padding:19px 0 0 17px;color:#a62a28">"f6a85c6a.7f4c2"</div></div>
    <div class="flex-grow-1" style="padding:21px 0 0 10px;font-size:28.15px;line-height:42px;color:#555">This sketch reads the 18B20 temperature<br>sensor value and sends it to the local MQTT<br>broker.</div>
    <div class="foot"></div>
    <div class="pfb d-flex align-items-center justify-content-center" style="padding:2px 0 0 6px">Provide Feedback</div>
   </div>
  </div>
 </main>
</div>

<div class="dl chrome d-flex align-items-center">
 <svg width="24" height="30" style="margin-left:44px"><path d="M1 0h15l7 7v22H1z" fill="#f1f1f1"/><path d="M16 0l7 7h-7z" fill="#bbb"/><rect x="5" y="7" width="13" height="14" fill="#2f6bf0"/><path d="M13 9l-3 10" stroke="#fff" stroke-width="1.500"/></svg>
 <span style="margin-left:30px;font-size:25.9px;line-height:36px">flows_raspberrypi.json</span>
 <svg width="18" height="12" style="margin-left:40px"><path d="M2 10l7-8 7 8" fill="none" stroke="#ccc" stroke-width="2.600"/></svg>
 <div style="width:2px;height:88px;background:#5f6063;margin-left:38px"></div>
 <div class="ms-auto d-flex align-items-center justify-content-center" style="width:161px;height:64px;border:1px solid #404246;border-radius:8px;color:#8ab0f0;font-size:24px;font-weight:500;margin-top:-4px">Show all</div>
 <svg width="18" height="18" style="margin:-2px 27px 0 28px;color:#ccc"><use href="#x"/></svg>
</div>
<script>
// palette nodes that show faintly through the drawer
const names = {422:'inject',502:'debug',582:'complete',662:'catch',742:'status',822:'link in',902:'link out',982:'comment',
 1192:'function',1272:'switch',1352:'change',1432:'range',1512:'template',1592:'delay',1672:'trigger',1752:'rbe'};
let out = '';
for (const y in names) out += `<rect x="658" y="${y}" width="244" height="59" rx="9" fill-opacity=".2" stroke="#000" stroke-width="2" stroke-opacity=".5"/><rect x="892" y="${+y+20}" width="19" height="19" rx="5" fill="none" stroke="#000" stroke-opacity=".6" stroke-width="2"/><text x="811" y="${+y+39}" text-anchor="middle">${names[y]}</text>`;
document.getElementById('gh').innerHTML += out;
</script>
</body>
</html>
